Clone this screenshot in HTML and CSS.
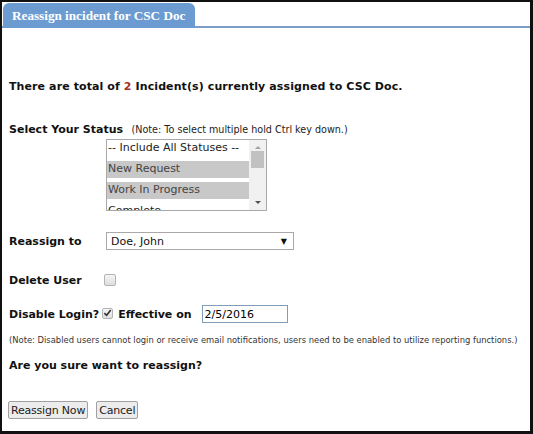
FILE: index.html
```html
<!DOCTYPE html>
<html lang="en">
<head>
    <meta charset="UTF-8">
    <title>Reassign incident</title>
    <link rel="stylesheet" href="styles.css">
</head>
<body>
<div class="frame">
    <div class="tabbar">
        <div class="tab">Reassign incident for CSC Doc</div>
    </div>

    <div class="content">
        <p class="intro">There are total of <span class="count">2</span> Incident(s) currently assigned to CSC Doc.</p>

        <p class="row-status"><b>Select Your Status</b> <span class="hint">(Note: To select multiple hold Ctrl key down.)</span></p>

        <div class="listbox">
            <div class="options">
                <div class="opt">-- Include All Statuses --</div>
                <div class="opt selected">New Request</div>
                <div class="opt selected">Work In Progress</div>
                <div class="opt">Complete</div>
            </div>
            <div class="scroll">
                <span class="arrow up"></span>
                <span class="thumb"></span>
                <span class="arrow down"></span>
            </div>
        </div>

        <div class="field reassign">
            <label class="label">Reassign to</label>
            <div class="dropdown">
                <span>Doe, John</span>
                <span class="caret">&#9660;</span>
            </div>
        </div>

        <div class="field delete">
            <label class="label">Delete User</label>
            <span class="check"></span>
        </div>

        <div class="field disable">
            <label class="label-inline">Disable Login?</label>
            <span class="check checked">
                <svg width="10" height="10" viewBox="0 0 10 10"><path d="M1.5 5.2 L4 7.6 L8.6 1.6" fill="none" stroke="#333" stroke-width="1.8"/></svg>
            </span>
            <label class="label-inline eff" for="eff">Effective on</label>
            <input type="text" id="eff" class="date" value="2/5/2016">
        </div>

        <p class="note">(Note: Disabled users cannot login or receive email notifications, users need to be enabled to utilize reporting functions.)</p>

        <p class="question">Are you sure want to reassign?</p>

        <div class="buttons">
            <button class="btn">Reassign Now</button>
            <button class="btn">Cancel</button>
        </div>
    </div>
</div>
</body>
</html>
```

FILE: styles.css
```css
* {
    margin: 0;
    padding: 0;
    box-sizing: border-box;
}

body {
    font-family: "DejaVu Sans", Verdana, sans-serif;
    color: #111;
    background: #fff;
}

.frame {
    width: 533px;
    height: 434px;
    border-style: solid;
    border-color: #111;
    border-width: 2px 3px 3px 2px;
    background: #fff;
    overflow: hidden;
}

.tabbar {
    height: 26px;
    padding: 1px 0 0 1px;
    border-bottom: 2px solid #7b9dc7;
    display: flex;
}

.tab {
    width: 192px;
    height: 25px;
    background: #6b9bd0;
    color: #fff;
    font-family: "Liberation Serif", "Times New Roman", serif;
    font-weight: bold;
    font-size: 13.2px;
    line-height: 25px;
    padding-left: 9px;
    white-space: nowrap;
    border-radius: 6px 6px 0 0;
}

.content {
    padding-left: 7px;
}

.intro {
    margin-top: 51px;
    font-size: 11px;
    font-weight: bold;
    line-height: 16px;
    letter-spacing: 0.1px;
}

.count {
    color: #a0302a;
}

.row-status {
    margin-top: 27px;
    font-size: 11px;
    line-height: 16px;
}

.hint {
    font-size: 9.6px;
    margin-left: 5px;
    color: #222;
}

.listbox {
    margin: 1px 0 0 97px;
    width: 161px;
    height: 72px;
    border: 1px solid #a9a9a9;
    display: flex;
    overflow: hidden;
    font-size: 11px;
}

.options {
    flex: 1;
}

.opt {
    height: 17px;
    margin-bottom: 4px;
    line-height: 16px;
    padding: 0 1px;
    color: #222;
}

.selected {
    background: #c8c8c8;
    color: #444;
}

.scroll {
    width: 17px;
    background: #f1f1f1;
    display: flex;
    flex-direction: column;
    align-items: center;
}

.thumb {
    width: 13px;
    height: 17px;
    background: #c1c1c1;
    margin-top: 2px;
}

.arrow {
    width: 0;
    height: 0;
    border-left: 3px solid transparent;
    border-right: 3px solid transparent;
}

.up {
    margin-top: 6px;
    border-bottom: 3px solid #a3a3a3;
}

.down {
    margin-top: auto;
    margin-bottom: 6px;
    border-top: 3px solid #505050;
}

.field {
    display: flex;
    align-items: center;
    font-size: 11px;
}

.label {
    width: 97px;
    font-weight: bold;
}

.label-inline {
    font-weight: bold;
}

.reassign {
    margin-top: 21px;
    height: 18px;
}

.dropdown {
    width: 188px;
    height: 18px;
    border: 1px solid #a9a9a9;
    display: flex;
    justify-content: space-between;
    align-items: center;
    padding: 0 6px 0 4px;
    font-size: 11px;
}

.caret {
    font-size: 8px;
}

.delete {
    margin-top: 22px;
    height: 16px;
}

.check {
    width: 12px;
    height: 12px;
    border: 1px solid #b4b4b4;
    border-radius: 2px;
    background: linear-gradient(#f4f4f4, #dedede);
    display: flex;
    align-items: center;
    justify-content: center;
    margin-left: -2px;
}

.disable {
    margin-top: 17px;
    height: 18px;
}

.disable .check {
    width: 11px;
    height: 11px;
    margin: -2px 5px 0 3px;
}

.eff {
    margin-right: 10px;
}

.date {
    width: 86px;
    height: 18px;
    border: 1px solid #7f9db9;
    font-family: "DejaVu Sans", Verdana, sans-serif;
    font-size: 11px;
    padding: 0 2px;
    outline: none;
}

.note {
    margin-top: 11px;
    font-size: 8.4px;
    line-height: 12px;
    color: #333;
}

.question {
    margin-top: 12px;
    font-size: 11px;
    font-weight: bold;
    line-height: 16px;
}

.buttons {
    margin-top: 27px;
    display: flex;
    gap: 8px;
    margin-left: -1px;
}

.btn {
    height: 18px;
    padding: 0 2px;
    font-family: "DejaVu Sans", Verdana, sans-serif;
    font-size: 11px;
    letter-spacing: -0.2px;
    background: #ececec;
    border: 1px solid #a0a0a0;
    border-radius: 2px;
    color: #222;
}
```
